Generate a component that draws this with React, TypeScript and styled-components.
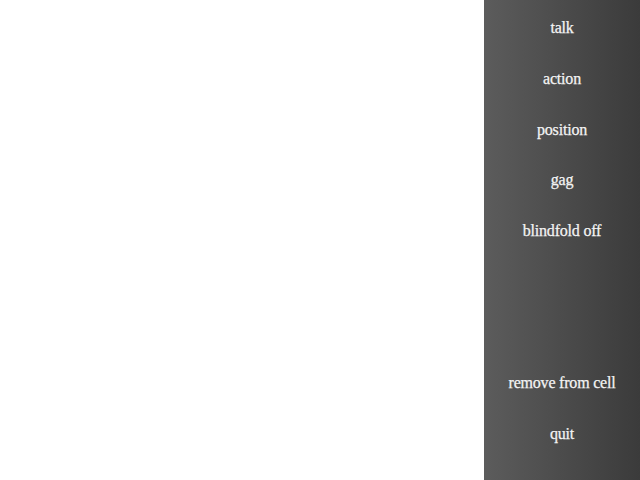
import React from "react";
import styled, { createGlobalStyle } from "styled-components";

const Global = createGlobalStyle`
  html, body { margin: 0; padding: 0; width: 640px; height: 480px; background: #ffffff; overflow: hidden; }
  #root { width: 640px; height: 480px; }
`;

const Screen = styled.div`
  display: flex;
  width: 640px;
  height: 480px;
`;

const Stage = styled.div`
  flex: 1;
  background: #ffffff;
`;

const Menu = styled.nav`
  width: 156px;
  height: 480px;
  background: linear-gradient(to right, #5c5c5c, #3b3b3b);
  display: grid;
  grid-template-rows: repeat(9, 50.7px);
  padding-top: 3px;
  box-sizing: border-box;
`;

const Item = styled.div<{ $empty?: boolean }>`
  display: flex;
  align-items: center;
  justify-content: center;
  color: #f4f4f4;
  font-family: "Liberation Serif", serif;
  font-size: 16px;
  letter-spacing: -0.2px;
  -webkit-text-stroke: 0.25px #f4f4f4;
  cursor: ${(p) => (p.$empty ? "default" : "pointer")};
`;

const items = ["talk", "action", "position", "gag", "blindfold off", "", "", "remove from cell", "quit"];

export default function App() {
  return (
    <>
      <Global />
      <Screen>
        <Stage />
        <Menu>
          {items.map((t, i) => (
            <Item key={i} $empty={!t}>{t}</Item>
          ))}
        </Menu>
      </Screen>
    </>
  );
}
